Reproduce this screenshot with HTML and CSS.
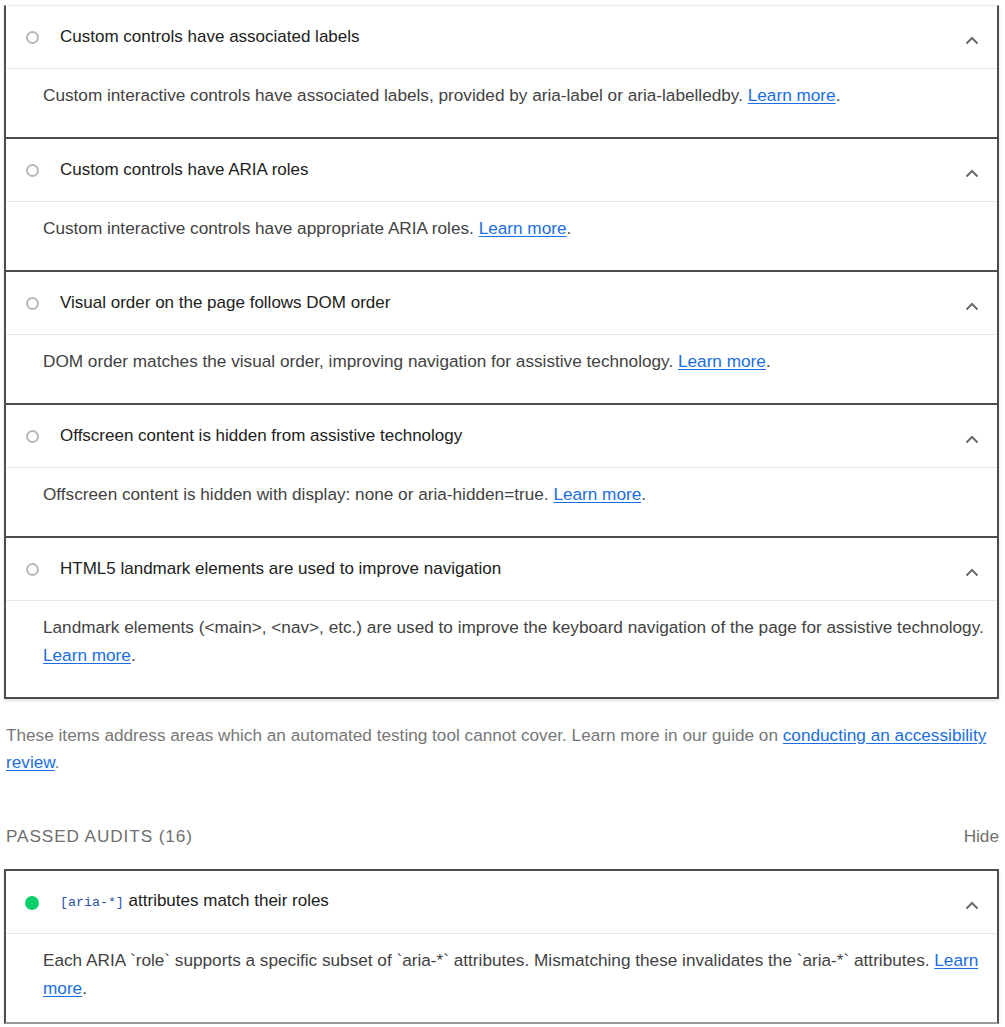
FILE: index.html
```html
<!DOCTYPE html>
<html lang="en">
<head>
<meta charset="utf-8">
<title>Accessibility audits</title>
<link rel="stylesheet" href="styles.css">
</head>
<body>
<div class="page">
  <div class="group">
    <section class="audit first">
      <div class="audit-head">
        <span class="icon manual"></span>
        <span class="title">Custom controls have associated labels</span>
        <svg class="chev" width="14" height="9" viewBox="0 0 14 9"><path d="M1.5 7.5 L7 2 L12.5 7.5" fill="none" stroke="#6b6b6b" stroke-width="2"/></svg>
      </div>
      <div class="audit-body">Custom interactive controls have associated labels, provided by aria-label or aria-labelledby. <a href="#">Learn more</a>.</div>
    </section>
    <section class="audit">
      <div class="audit-head">
        <span class="icon manual"></span>
        <span class="title">Custom controls have ARIA roles</span>
        <svg class="chev" width="14" height="9" viewBox="0 0 14 9"><path d="M1.5 7.5 L7 2 L12.5 7.5" fill="none" stroke="#6b6b6b" stroke-width="2"/></svg>
      </div>
      <div class="audit-body">Custom interactive controls have appropriate ARIA roles. <a href="#">Learn more</a>.</div>
    </section>
    <section class="audit">
      <div class="audit-head">
        <span class="icon manual"></span>
        <span class="title">Visual order on the page follows DOM order</span>
        <svg class="chev" width="14" height="9" viewBox="0 0 14 9"><path d="M1.5 7.5 L7 2 L12.5 7.5" fill="none" stroke="#6b6b6b" stroke-width="2"/></svg>
      </div>
      <div class="audit-body">DOM order matches the visual order, improving navigation for assistive technology. <a href="#">Learn more</a>.</div>
    </section>
    <section class="audit">
      <div class="audit-head">
        <span class="icon manual"></span>
        <span class="title">Offscreen content is hidden from assistive technology</span>
        <svg class="chev" width="14" height="9" viewBox="0 0 14 9"><path d="M1.5 7.5 L7 2 L12.5 7.5" fill="none" stroke="#6b6b6b" stroke-width="2"/></svg>
      </div>
      <div class="audit-body">Offscreen content is hidden with display: none or aria-hidden=true. <a href="#">Learn more</a>.</div>
    </section>
    <section class="audit">
      <div class="audit-head">
        <span class="icon manual"></span>
        <span class="title">HTML5 landmark elements are used to improve navigation</span>
        <svg class="chev" width="14" height="9" viewBox="0 0 14 9"><path d="M1.5 7.5 L7 2 L12.5 7.5" fill="none" stroke="#6b6b6b" stroke-width="2"/></svg>
      </div>
      <div class="audit-body">Landmark elements (&lt;main&gt;, &lt;nav&gt;, etc.) are used to improve the keyboard navigation of the page for assistive technology. <a href="#">Learn more</a>.</div>
    </section>
  </div>

  <p class="group-desc">These items address areas which an automated testing tool cannot cover. Learn more in our guide on <a href="#">conducting an accessibility review</a>.</p>

  <div class="passed-head">
    <span class="passed-title">Passed audits <span class="count">(16)</span></span>
    <span class="hide">Hide</span>
  </div>

  <section class="audit passed">
    <div class="audit-head">
      <span class="icon pass"></span>
      <span class="title"><code>[aria-*]</code> attributes match their roles</span>
      <svg class="chev" width="14" height="9" viewBox="0 0 14 9"><path d="M1.5 7.5 L7 2 L12.5 7.5" fill="none" stroke="#6b6b6b" stroke-width="2"/></svg>
    </div>
    <div class="audit-body">Each ARIA `role` supports a specific subset of `aria-*` attributes. Mismatching these invalidates the `aria-*` attributes. <a href="#">Learn more</a>.</div>
  </section>
</div>
</body>
</html>
```

FILE: styles.css
```css
html, body {
  margin: 0;
  padding: 0;
  background: #ffffff;
}

body {
  font-family: "Liberation Sans", Arial, Helvetica, sans-serif;
  font-size: 17.2px;
  color: #212121;
}

.page {
  width: 995px;
  padding: 5px 0 0 4px;
}

.audit {
  border: 2px solid #4d4d4d;
  border-top: none;
  background: #fff;
  box-shadow: 0 2px 3px rgba(0, 0, 0, 0.12);
  position: relative;
}

.audit.first {
  border-top: 1px solid #e9e9e9;
}

.audit.passed {
  border-top: 2px solid #4d4d4d;
  border-bottom-color: #9a9a9a;
}

.audit-head {
  height: 63px;
  display: flex;
  align-items: center;
  padding: 0 18px 0 20px;
  border-bottom: 1px solid #e8e8e8;
  box-sizing: border-box;
}

.icon {
  flex: none;
  box-sizing: border-box;
  border-radius: 50%;
  margin-right: 21px;
}

.icon.manual {
  width: 13px;
  height: 13px;
  border: 2px solid #b8b8b8;
}

.icon.pass {
  width: 14px;
  height: 14px;
  background: #0cce6b;
  margin-left: -1px;
  margin-top: 2px;
  margin-right: 21px;
}

.title {
  flex: 1;
  line-height: 20px;
  font-size: 17px;
  color: #212121;
}

.title code {
  font-family: "Liberation Mono", "DejaVu Sans Mono", monospace;
  font-size: 13.3px;
  color: #2b52a6;
}

.chev {
  flex: none;
  margin-top: 6px;
}

.audit-body {
  padding: 12px 12px 28px 37px;
  line-height: 28px;
  color: #424242;
}

.audit.passed .audit-body {
  padding-bottom: 20px;
}

a {
  color: #1a6ee0;
  text-decoration: underline;
  text-underline-offset: 2px;
}

.group-desc {
  margin: 23px 0 0 2px;
  line-height: 27px;
  color: #777777;
}

.passed-head {
  display: flex;
  justify-content: space-between;
  align-items: center;
  margin: 47px 0 0 2px;
  line-height: 27px;
  padding-bottom: 19px;
  color: #6f6f6f;
}

.passed-title {
  text-transform: uppercase;
  letter-spacing: 0.9px;
}

.hide {
  color: #6f6f6f;
}
```
